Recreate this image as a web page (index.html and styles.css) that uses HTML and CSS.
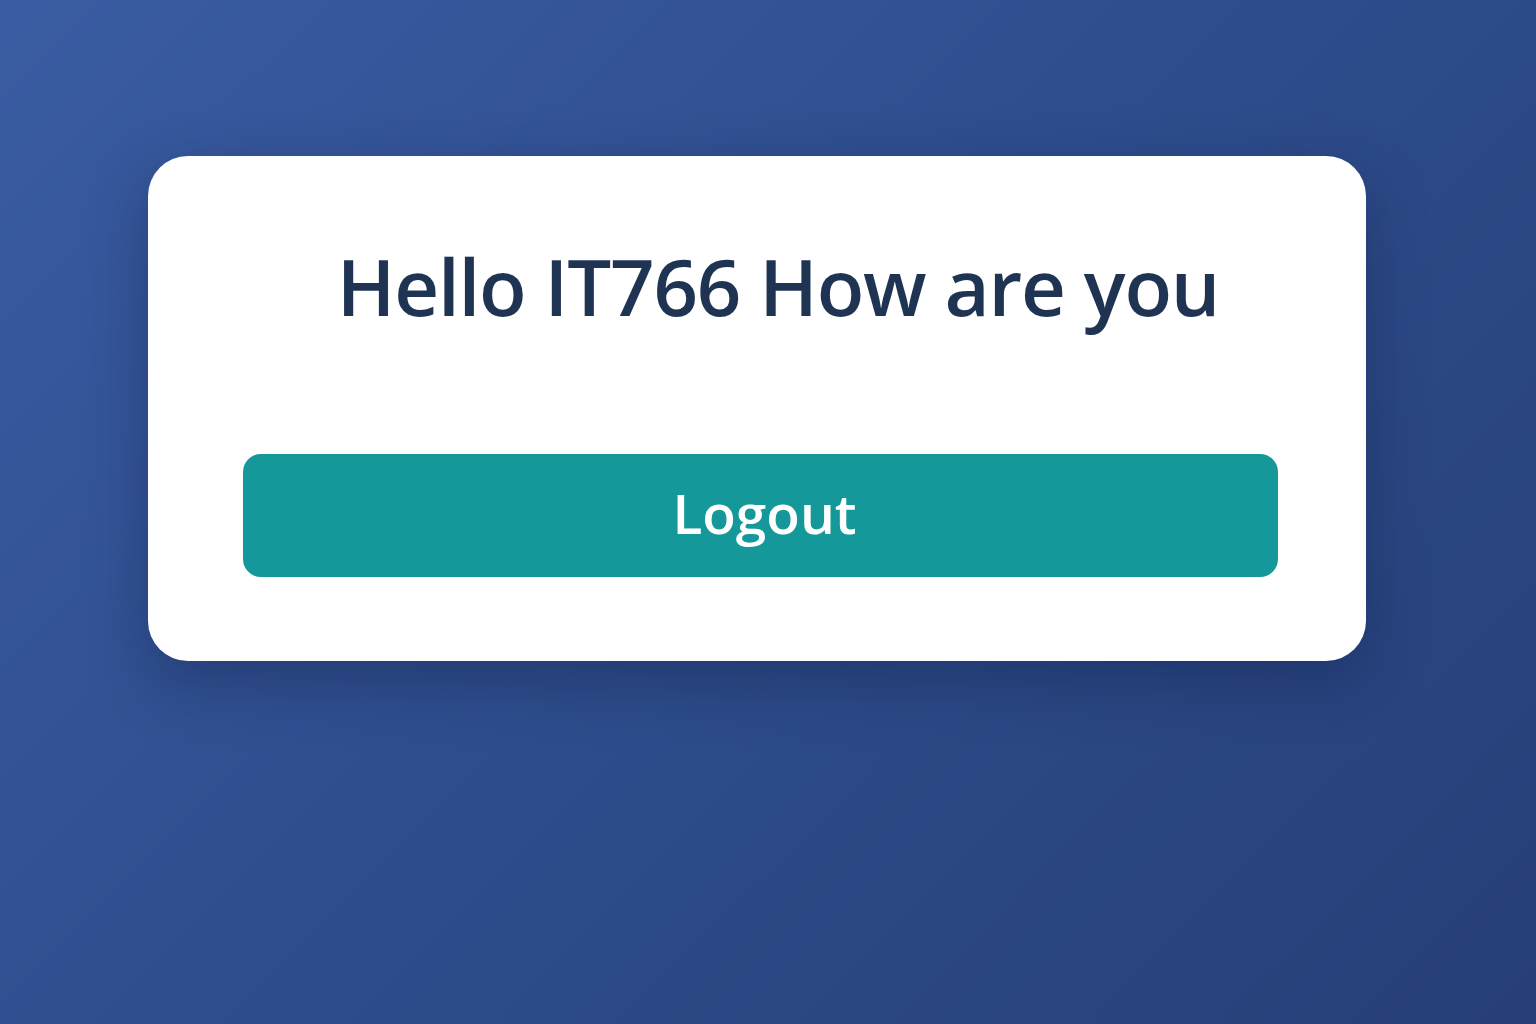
FILE: index.html
```html
<!DOCTYPE html>
<html>
<head>
<meta charset="utf-8">
<link rel="stylesheet" href="styles.css">
</head>
<body>
<main class="page">
  <section class="card">
    <h1 class="greeting">Hello IT766 How are you</h1>
    <button class="logout">Logout</button>
  </section>
</main>
</body>
</html>
```
FILE: styles.css
```css
html, body {
  margin: 0;
  height: 100%;
}
body {
  background: linear-gradient(135deg, #3a5ca2 0%, #2f4e8e 45%, #263f78 100%);
  font-family: "Open Sans", "Noto Sans", sans-serif;
}
.page {
  display: flex;
  padding: 156px 0 0 148px;
}
.card {
  width: 1218px;
  height: 505px;
  box-sizing: border-box;
  background: #ffffff;
  border-radius: 40px;
  box-shadow: 0 20px 60px rgba(20, 35, 80, 0.45);
  padding: 77px 88px 84px 95px;
  display: flex;
  flex-direction: column;
}
.greeting {
  margin: 0;
  font-size: 78px;
  font-weight: 600;
  color: #1f3352;
  text-align: center;
  line-height: 106px;
  letter-spacing: -1.2px;
  padding-left: 35px;
}
.logout {
  margin-top: auto;
  width: 1035px;
  height: 123px;
  border: none;
  border-radius: 18px;
  background: #159899;
  color: #ffffff;
  font-family: "Open Sans", "Noto Sans", sans-serif;
  font-size: 55px;
  font-weight: 600;
  padding: 0 0 6px 8px;
}
```
